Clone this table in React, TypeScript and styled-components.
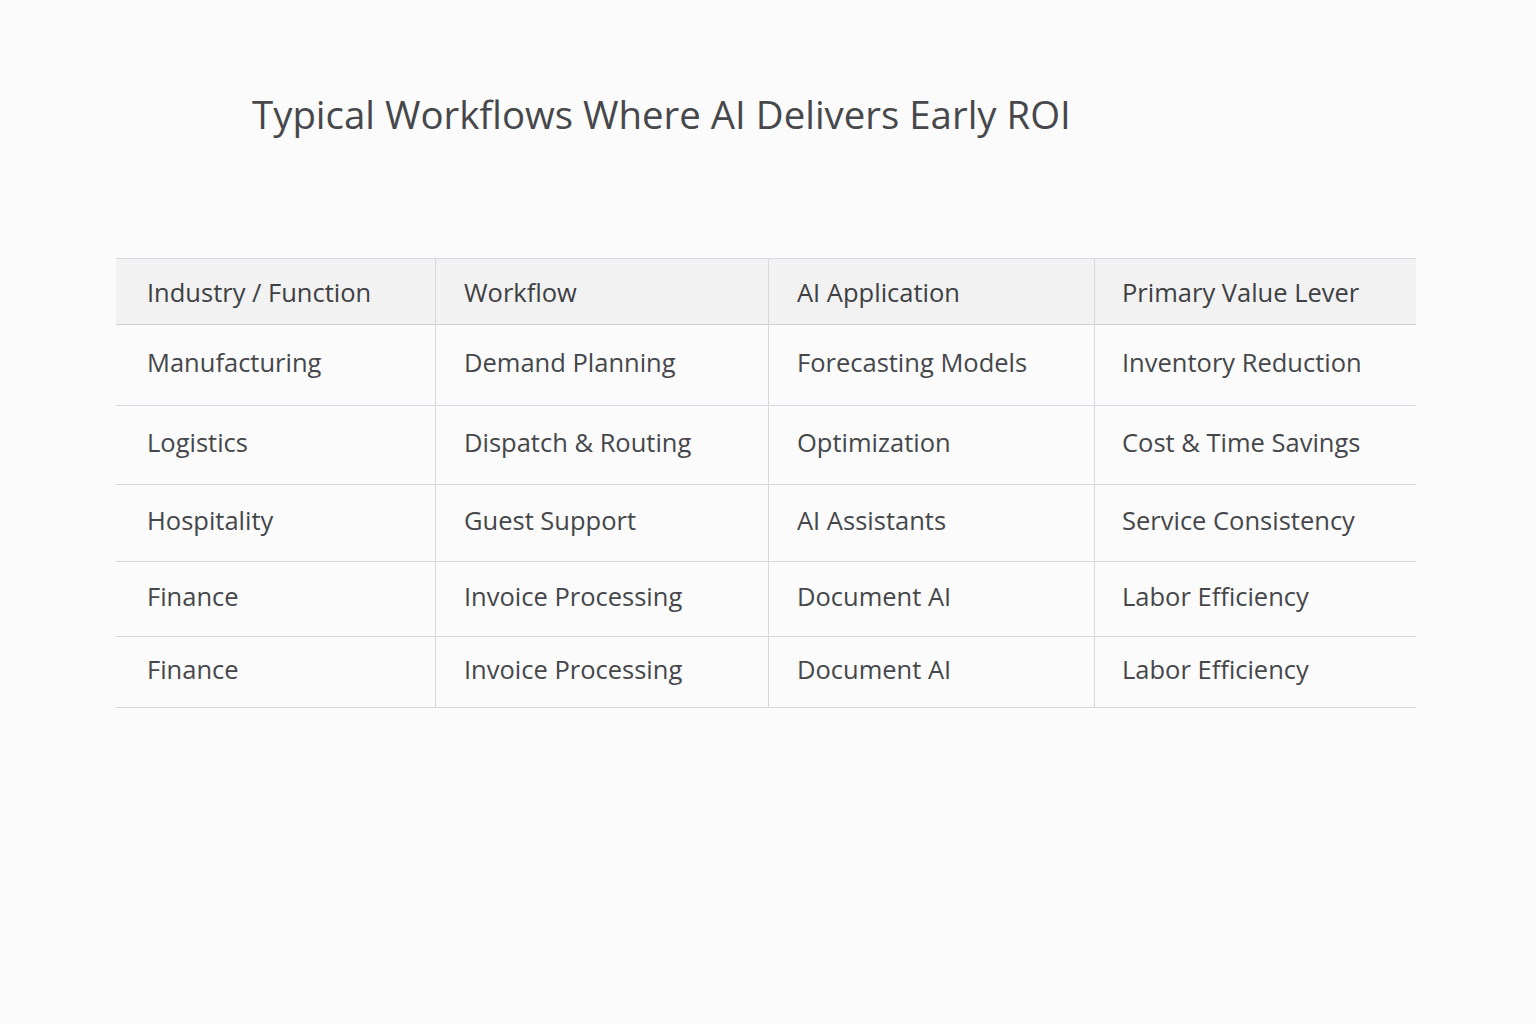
import React from "react";
import styled, { createGlobalStyle } from "styled-components";

const Global = createGlobalStyle`
  html, body { margin: 0; padding: 0; }
  body {
    background: #fbfbfb;
    font-family: "Open Sans", "Noto Sans", sans-serif;
    color: #444649;
  }
`;

const Page = styled.div`
  width: 1536px;
  height: 1024px;
  box-sizing: border-box;
  padding: 88px 120px 0 116px;
  background: #fbfbfb;
`;

const Title = styled.h1`
  margin: 0 0 0 136px;
  font-size: 38.4px;
  font-weight: 400;
  line-height: 52px;
  color: #47484b;
  letter-spacing: 0;
`;

const Table = styled.div`
  margin-top: 118px;
  width: 1300px;
  display: grid;
  grid-template-columns: 320px 333px 326px 321px;
  grid-template-rows: 66px 81px 79px 77px 75px 71px;
  border-top: 1px solid #d8dbde;
`;

const Cell = styled.div<{ $head?: boolean; $last?: boolean }>`
  display: flex;
  align-items: center;
  box-sizing: border-box;
  padding-left: ${(p) => (p.$last ? 27 : 28)}px;
  padding-bottom: ${(p) => (p.$head ? 0 : 7)}px;
  font-size: 25.5px;
  color: ${(p) => (p.$head ? "#3e4043" : "#45474a")};
  background: ${(p) => (p.$head ? "#f1f2f1" : "transparent")};
  border-bottom: 1px solid ${(p) => (p.$head ? "#cfd2d5" : "#d6d9dc")};
  border-right: ${(p) => (p.$last ? "none" : "1px solid #d6d9dc")};
  white-space: nowrap;
  &:nth-child(4n + 1) {
    padding-left: 31px;
  }
`;

const headers = ["Industry / Function", "Workflow", "AI Application", "Primary Value Lever"];
const rows = [
  ["Manufacturing", "Demand Planning", "Forecasting Models", "Inventory Reduction"],
  ["Logistics", "Dispatch & Routing", "Optimization", "Cost & Time Savings"],
  ["Hospitality", "Guest Support", "AI Assistants", "Service Consistency"],
  ["Finance", "Invoice Processing", "Document AI", "Labor Efficiency"],
  ["Finance", "Invoice Processing", "Document AI", "Labor Efficiency"],
];

export default function App() {
  return (
    <>
      <Global />
      <Page>
        <Title>Typical Workflows Where AI Delivers Early ROI</Title>
        <Table>
          {headers.map((h, i) => (
            <Cell key={h} $head $last={i === 3}>
              {h}
            </Cell>
          ))}
          {rows.map((r, ri) =>
            r.map((c, ci) => (
              <Cell key={`${ri}-${ci}`} $last={ci === 3}>
                {c}
              </Cell>
            ))
          )}
        </Table>
      </Page>
    </>
  );
}
